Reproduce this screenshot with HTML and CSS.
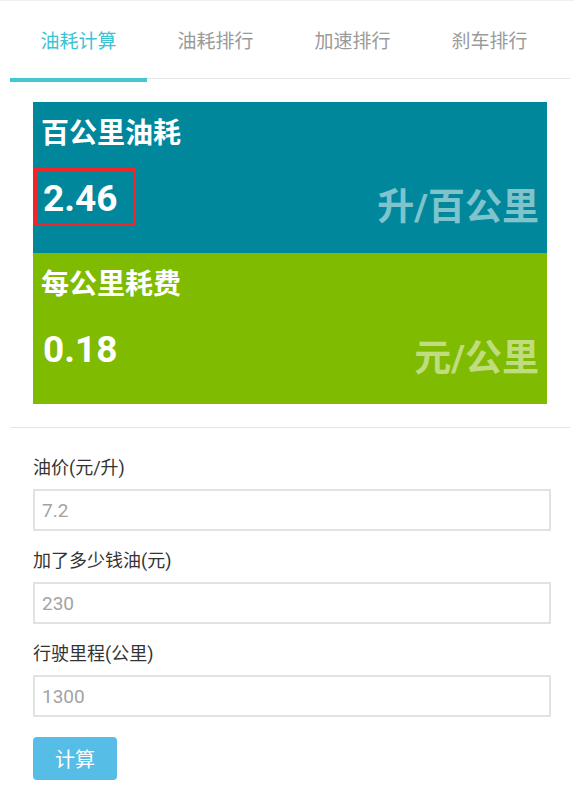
FILE: index.html
```html
<!DOCTYPE html>
<html lang="zh-CN">
<head>
<meta charset="utf-8">
<title>油耗计算</title>
<link rel="stylesheet" href="styles.css">
</head>
<body>
<div class="topline"></div>
<nav class="tabs">
  <div class="tab active">油耗计算</div>
  <div class="tab">油耗排行</div>
  <div class="tab">加速排行</div>
  <div class="tab">刹车排行</div>
</nav>

<section class="result">
  <div class="panel blue">
    <div class="panel-title">百公里油耗</div>
    <div class="panel-row">
      <div class="value marked">2.46</div>
      <div class="unit">升/百公里</div>
    </div>
  </div>
  <div class="panel green">
    <div class="panel-title">每公里耗费</div>
    <div class="panel-row">
      <div class="value">0.18</div>
      <div class="unit">元/公里</div>
    </div>
  </div>
</section>

<hr class="divider">

<form class="form">
  <label class="field">
    <span class="label">油价(元/升)</span>
    <input class="input" type="text" placeholder="7.2">
  </label>
  <label class="field">
    <span class="label">加了多少钱油(元)</span>
    <input class="input" type="text" placeholder="230">
  </label>
  <label class="field">
    <span class="label">行驶里程(公里)</span>
    <input class="input" type="text" placeholder="1300">
  </label>
  <button class="btn" type="button">计算</button>
</form>
</body>
</html>
```

FILE: styles.css
```css
html, body {
  margin: 0;
  padding: 0;
  background: #ffffff;
}
body {
  font-family: Roboto, "Noto Sans CJK SC", sans-serif;
  color: #333333;
}
.topline {
  height: 1px;
  background: #f0f0f0;
}
.tabs {
  display: flex;
  margin: 0 4px 0 10px;
  border-bottom: 1px solid #e6e6e6;
}
.tab {
  width: 137px;
  height: 77px;
  display: flex;
  align-items: center;
  justify-content: center;
  font-size: 19px;
  color: #9a9a9a;
  border-bottom: 4px solid transparent;
  margin-bottom: -4px;
  font-family: "Noto Sans CJK SC", sans-serif;
}
.tab.active {
  color: #3cc3d3;
  border-bottom-color: #42c7d5;
}
.result {
  margin: 23px 27px 0 33px;
}
.panel {
  height: 151px;
  box-sizing: border-box;
  padding: 0 8px 0 8px;
  color: #ffffff;
}
.blue { background: #00879b; }
.green { background: #7fbb00; }
.panel-title {
  height: 58px;
  line-height: 58px;
  font-size: 28px;
  font-weight: 700;
  font-family: "Noto Sans CJK SC", sans-serif;
}
.panel-row {
  display: flex;
  justify-content: space-between;
  align-items: flex-end;
  margin-top: 8px;
}
.value {
  width: 102px;
  height: 58px;
  box-sizing: border-box;
  margin-left: -7px;
  padding-left: 6px;
  border: 3px solid transparent;
  line-height: 55px;
  font-size: 37px;
  font-weight: 700;
}
.value.marked {
  border-color: #f0262a;
}
.unit {
  font-size: 37px;
  line-height: 40px;
  font-weight: 700;
  color: rgba(255, 255, 255, 0.5);
  margin-bottom: -2px;
}
.divider {
  margin: 23px 4px 0 10px;
  border: 0;
  height: 1px;
  background: #e6e6e6;
}
.form {
  margin: 27px 23px 0 33px;
  display: flex;
  flex-direction: column;
  align-items: flex-start;
}
.field {
  display: flex;
  flex-direction: column;
  align-self: stretch;
  margin-bottom: 17px;
}
.label {
  font-size: 18px;
  line-height: 26px;
  margin-bottom: 8px;
  color: #333333;
}
.input {
  height: 42px;
  box-sizing: border-box;
  border: 2px solid #e2e2e2;
  padding: 0 7px;
  font-family: Roboto, sans-serif;
  font-size: 19px;
  color: #333;
  outline: none;
  margin: 0;
}
.input::placeholder {
  color: #a3a3a3;
}
.btn {
  width: 84px;
  height: 43px;
  border: 0;
  border-radius: 4px;
  background: #56bde6;
  color: #ffffff;
  font-family: "Noto Sans CJK SC", sans-serif;
  font-size: 20px;
  padding: 0;
  margin-top: 3px;
}
```
